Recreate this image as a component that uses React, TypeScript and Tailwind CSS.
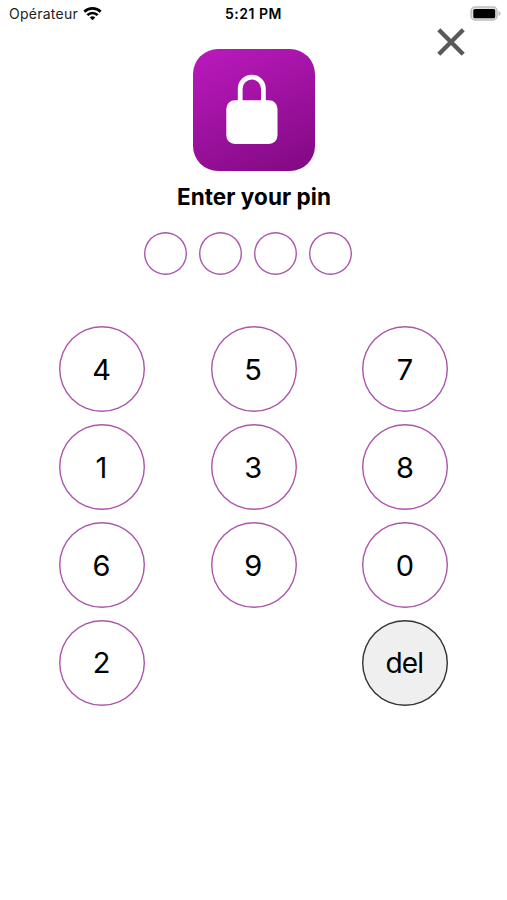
import React, { useState } from "react";

const KEYS = ["4", "5", "7", "1", "3", "8", "6", "9", "0", "2", "", "del"];
const PIN_LENGTH = 4;

const WifiIcon = () => (
  <svg className="h-[14px] w-[19px]" viewBox="0 0 20 14" fill="none" stroke="#000" strokeWidth="2.8">
    <path d="M1.4 4.6a12.3 12.3 0 0 1 17.2 0" />
    <path d="M4.6 8.2a7.6 7.6 0 0 1 10.8 0" />
    <path d="M10 13.6 7.1 10.7a4.1 4.1 0 0 1 5.8 0Z" fill="#000" stroke="none" />
  </svg>
);

const BatteryIcon = () => (
  <svg className="h-[15px] w-[31px]" viewBox="0 0 31 15">
    <rect x="1.1" y="1.1" width="26" height="12.8" rx="4" fill="#e4e4e4" stroke="#bdbdbd" strokeWidth="1.5" />
    <rect x="3.3" y="2.9" width="21.9" height="9.4" rx="1.6" fill="#000" />
    <path d="M28.6 5c1.3.6 1.9 1.4 1.9 2.5s-.6 1.9-1.9 2.5Z" fill="#b5b5b5" />
  </svg>
);

const StatusBar = () => (
  <header className="grid h-[27px] grid-cols-[1fr_auto_1fr] items-center pl-[9px] pr-[6px] text-[#222]">
    <div className="flex items-center gap-[5px]">
      <span className="text-[14px] tracking-[0.25px]">Opérateur</span>
      <WifiIcon />
    </div>
    <span className="-ml-[3px] text-[14px] font-semibold tracking-[0.5px] text-black">5:21 PM</span>
    <div className="flex justify-end">
      <BatteryIcon />
    </div>
  </header>
);

const LockBadge = () => (
  <div className="mt-[22px] flex size-[122px] justify-center rounded-[25px] bg-linear-[155deg] from-[#bb1abd] to-[#800982]">
    <svg className="mr-[3px] mt-[25px] h-[72px] w-[54px]" viewBox="0 0 54 72">
      <path d="M14.2 32V14.7a11.6 11.6 0 0 1 23.2 0V32" fill="none" stroke="#fff" strokeWidth="4.8" />
      <rect x="0.3" y="26.2" width="51.2" height="43.8" rx="8.5" fill="#fff" />
    </svg>
  </div>
);

interface KeyProps {
  label: string;
  onPress: (label: string) => void;
}

const Key: React.FC<KeyProps> = ({ label, onPress }) => {
  if (!label) return <span />;
  return (
    <button
      onClick={() => onPress(label)}
      className={`flex size-[86px] items-center justify-center rounded-full inset-ring-[1.4px] pt-px text-black ${
        label === "del"
          ? "bg-[#efefef] pr-[2px] text-[28px] tracking-[-0.8px] inset-ring-[#333]"
          : "pr-px text-[29px] inset-ring-[#ab55ab]"
      }`}
    >
      {label}
    </button>
  );
};

const App: React.FC = () => {
  const [pin, setPin] = useState("");

  const handlePress = (label: string) => {
    if (label === "del") setPin(pin.slice(0, -1));
    else if (pin.length < PIN_LENGTH) setPin(pin + label);
  };

  return (
    <div className="flex h-[900px] w-[507px] flex-col bg-white font-['Inter','Liberation_Sans',sans-serif]">
      <StatusBar />
      <div className="grid grid-cols-[193px_122px_1fr]">
        <span />
        <LockBadge />
        <button aria-label="Close" onClick={() => setPin("")} className="ml-[122px] mt-px size-[28px]">
          <svg className="size-[28px]" viewBox="0 0 28 28" stroke="#595959" strokeWidth="4.4">
            <path d="M1.8 1.8 26.2 26.2M26.2 1.8 1.8 26.2" />
          </svg>
        </button>
      </div>
      <h1 className="mt-[11px] pl-px text-center text-[22.5px] leading-[30px] font-[650] tracking-[0.06px] text-black">
        Enter your pin
      </h1>
      <div className="mt-[20px] flex gap-[12px] pl-[144px]">
        {Array.from({ length: PIN_LENGTH }, (_, i) => (
          <span
            key={i}
            className={`size-[43px] rounded-full inset-ring-[1.4px] inset-ring-[#ab55ab] ${i < pin.length ? "bg-[#ab55ab]" : ""}`}
          />
        ))}
      </div>
      <div className="mt-[51.3px] grid grid-cols-[86px_86px_86px] gap-x-[65.7px] gap-y-[11.8px] pl-[59px]">
        {KEYS.map((label, i) => (
          <Key key={i} label={label} onPress={handlePress} />
        ))}
      </div>
    </div>
  );
};

export default App;
